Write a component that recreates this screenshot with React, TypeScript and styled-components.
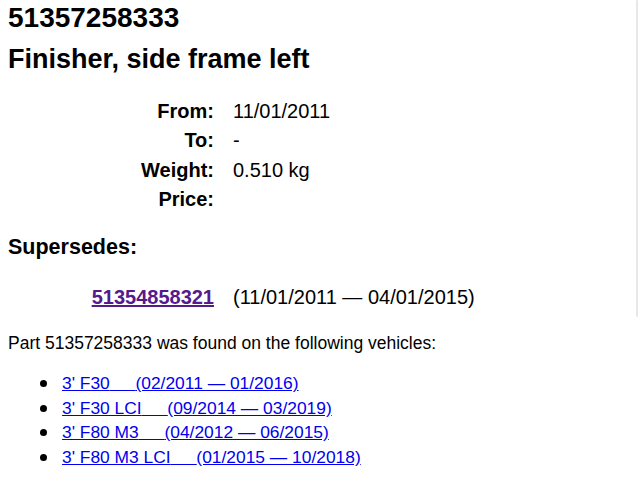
import styled, { createGlobalStyle } from 'styled-components'

const GlobalStyle = createGlobalStyle`
  html, body {
    margin: 0;
    padding: 0;
    background: #fff;
  }
  body {
    font-family: "Liberation Sans", Arial, Helvetica, sans-serif;
    color: #000;
  }
`

const Page = styled.div`
  padding: 0 8px;
`

const PartNumber = styled.h1`
  margin: 2px 0 0;
  font-size: 28px;
  line-height: 32px;
  font-weight: 700;
`

const PartName = styled.h2`
  margin: 9px 0 0;
  font-size: 27px;
  line-height: 32px;
  font-weight: 700;
`

const InfoGrid = styled.div<{ $top: number }>`
  display: grid;
  grid-template-columns: 206px auto;
  column-gap: 19px;
  margin-top: ${(p) => p.$top}px;
  font-size: 20px;
  line-height: 29.3px;
`

const Label = styled.div`
  text-align: right;
  font-weight: 700;
`

const Value = styled.div`
  white-space: nowrap;
`

const SectionTitle = styled.h3`
  margin: 21px 0 0;
  font-size: 21.5px;
  line-height: 24px;
  font-weight: 700;
`

const PartLink = styled.a`
  color: #551a8b;
  font-weight: 700;
  text-decoration: underline;
`

const Note = styled.p`
  margin: 21px 0 0;
  font-size: 17.5px;
  line-height: 20px;
`

const VehicleList = styled.ul`
  list-style: none;
  margin: 18px 0 0;
  padding: 0 0 0 31.5px;
  font-size: 17.4px;
  line-height: 24.5px;
`

const VehicleItem = styled.li`
  &::before {
    content: '';
    display: inline-block;
    width: 7px;
    height: 7px;
    border-radius: 50%;
    background: #000;
    margin-right: 15.5px;
    vertical-align: 2px;
  }
`

const VehicleLink = styled.a`
  color: #0000ee;
  text-decoration: underline;
`

const Gap = styled.span`
  letter-spacing: 0.3px;
`

const Scrollbar = styled.div`
  position: fixed;
  top: 0;
  left: 636px;
  width: 2px;
  height: 317px;
  background: #e8e8e8;
  border-radius: 1px;
`

const details = [
  { label: 'From:', value: '11/01/2011' },
  { label: 'To:', value: '-' },
  { label: 'Weight:', value: '0.510 kg' },
  { label: 'Price:', value: '' },
]

const vehicles = [
  { model: "3' F30", range: '(02/2011 — 01/2016)' },
  { model: "3' F30 LCI", range: '(09/2014 — 03/2019)' },
  { model: "3' F80 M3", range: '(04/2012 — 06/2015)' },
  { model: "3' F80 M3 LCI", range: '(01/2015 — 10/2018)' },
]

export default function App() {
  return (
    <>
      <GlobalStyle />
      <Page>
        <PartNumber>51357258333</PartNumber>
        <PartName>Finisher, side frame left</PartName>

        <InfoGrid $top={22}>
          {details.map((d) => (
            <>
              <Label key={d.label}>{d.label}</Label>
              <Value key={d.label + '-v'}>{d.value}</Value>
            </>
          ))}
        </InfoGrid>

        <SectionTitle>Supersedes:</SectionTitle>
        <InfoGrid $top={24}>
          <Label>
            <PartLink href="#">51354858321</PartLink>
          </Label>
          <Value>(11/01/2011 — 04/01/2015)</Value>
        </InfoGrid>

        <Note>Part 51357258333 was found on the following vehicles:</Note>
        <VehicleList>
          {vehicles.map((v) => (
            <VehicleItem key={v.model}>
              <VehicleLink href="#">
                {v.model}
                <Gap>{'\u00a0\u00a0\u00a0\u00a0\u00a0'}</Gap>
                {v.range}
              </VehicleLink>
            </VehicleItem>
          ))}
        </VehicleList>
      </Page>
      <Scrollbar />
    </>
  )
}
